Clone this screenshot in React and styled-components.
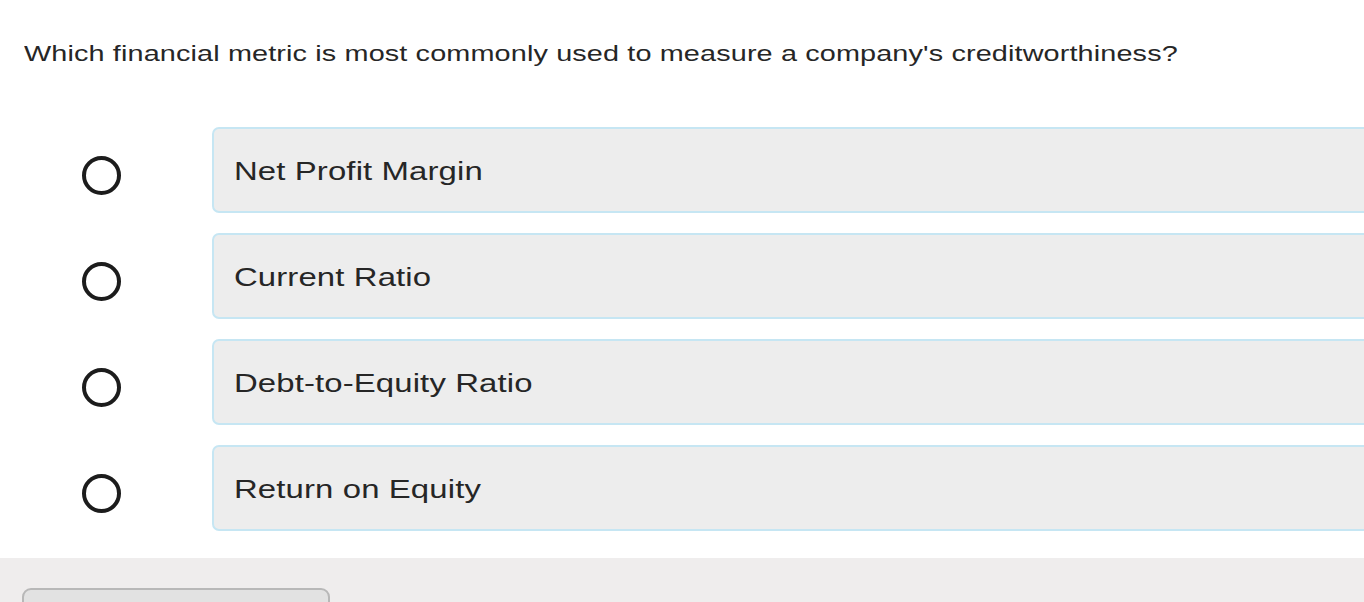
import React from "react";
import styled, { createGlobalStyle } from "styled-components";

const Global = createGlobalStyle`
  html, body { margin: 0; padding: 0; background: #ffffff; overflow: hidden; }
  body { font-family: "Liberation Sans", Arial, Helvetica, sans-serif; }
`;

const Page = styled.div`
  width: 1364px;
  height: 602px;
  display: flex;
  flex-direction: column;
  overflow: hidden;
`;

const Question = styled.p`
  margin: 0;
  padding: 39px 0 0 24px;
  font-size: 22px;
  line-height: 30px;
  color: #262626;
`;

/* the reference renders its text noticeably wide; a horizontal stretch matches it */
const Wide = styled.span`
  display: inline-block;
  white-space: nowrap;
  transform: scaleX(${(p) => p.$scale || 1.28});
  transform-origin: left center;
  letter-spacing: 0.1px;
`;

const Options = styled.div`
  display: flex;
  flex-direction: column;
  gap: 20px;
  padding: 58px 0 0 0;
`;

const Row = styled.label`
  display: flex;
  align-items: center;
`;

const RadioCell = styled.div`
  width: 212px;
  display: flex;
  padding-left: 82px;
  box-sizing: border-box;
`;

const Radio = styled.span`
  width: 39px;
  height: 39px;
  box-sizing: border-box;
  border-radius: 50%;
  border: 4px solid #1c1c1c;
  background: #ffffff;
  margin-top: 10px;
`;

const OptionBox = styled.div`
  flex: 1;
  margin-right: -12px;
  height: 86px;
  box-sizing: border-box;
  background: #ededed;
  border: 2px solid #c6e6f3;
  border-radius: 7px;
  display: flex;
  align-items: center;
  padding: 2px 0 0 20px;
  font-size: 25.7px;
  color: #262626;
`;

const Footer = styled.div`
  margin-top: 27px;
  flex: 1;
  background: #efeded;
  padding: 30px 0 0 22px;
`;

const Button = styled.button`
  display: block;
  width: 308px;
  height: 40px;
  background: #e2e2e2;
  border: 2px solid #b8b8b8;
  border-radius: 9px;
`;

const options = [
  "Net Profit Margin",
  "Current Ratio",
  "Debt-to-Equity Ratio",
  "Return on Equity",
];

export default function App() {
  return (
    <Page>
      <Global />
      <Question>
        <Wide $scale={1.31}>
          Which financial metric is most commonly used to measure a company's creditworthiness?
        </Wide>
      </Question>
      <Options>
        {options.map((o) => (
          <Row key={o}>
            <RadioCell>
              <Radio />
            </RadioCell>
            <OptionBox>
              <Wide>{o}</Wide>
            </OptionBox>
          </Row>
        ))}
      </Options>
      <Footer>
        <Button aria-label="Submit" />
      </Footer>
    </Page>
  );
}
